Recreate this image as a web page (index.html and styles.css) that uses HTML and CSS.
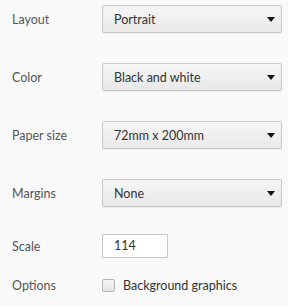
FILE: index.html
```html
<!DOCTYPE html>
<html>
<head>
    <title>Print settings</title>
    <link rel="stylesheet" href="styles.css">
</head>
<body>
    <div class="settings">
        <div class="row">
            <span class="label">Layout</span>
            <div class="select">Portrait<span class="arrow"></span></div>
        </div>
        <div class="row">
            <span class="label">Color</span>
            <div class="select">Black and white<span class="arrow"></span></div>
        </div>
        <div class="row">
            <span class="label">Paper size</span>
            <div class="select">72mm x 200mm<span class="arrow"></span></div>
        </div>
        <div class="row">
            <span class="label">Margins</span>
            <div class="select">None<span class="arrow"></span></div>
        </div>
        <div class="row row-scale">
            <span class="label">Scale</span>
            <div class="text-input">114</div>
        </div>
        <div class="row row-options">
            <span class="label">Options</span>
            <div class="check"><span class="box"></span>Background graphics</div>
        </div>
    </div>
</body>
</html>
```

FILE: styles.css
```css
body {
    margin: 0;
    background-color: #f9f9f9;
    font-family: Lato, 'Open Sans', sans-serif;
    font-size: 12.5px;
    color: #333;
}
.settings {
    padding: 5px 6px 0 12px;
}
.row {
    display: flex;
    align-items: center;
    height: 28px;
    margin-bottom: 30px;
}
.label {
    width: 90px;
    color: #555;
}
.select {
    flex: 1;
    height: 26px;
    display: flex;
    align-items: center;
    justify-content: space-between;
    padding: 0 6px 0 11px;
    border: 1px solid #c8c8c8;
    border-radius: 2px;
    background: linear-gradient(#f6f6f6, #e9e9e9);
    box-shadow: 0 1px 0 rgba(0, 0, 0, 0.04);
}
.arrow {
    width: 0;
    height: 0;
    border-left: 4px solid transparent;
    border-right: 4px solid transparent;
    border-top: 5px solid #111;
}
.row-scale {
    height: 24px;
    margin-top: -3px;
    margin-bottom: 20px;
}
.text-input {
    width: 53px;
    height: 22px;
    line-height: 22px;
    padding-left: 11px;
    background: #fff;
    border: 1px solid #c6c6c6;
    border-radius: 1px;
}
.row-options {
    height: 14px;
    margin-bottom: 0;
}
.check {
    display: flex;
    align-items: center;
}
.box {
    width: 11px;
    height: 11px;
    margin-right: 8px;
    border: 1px solid #b5b5b5;
    border-radius: 2px;
    background: linear-gradient(#f8f8f8, #e4e4e4);
}
```
